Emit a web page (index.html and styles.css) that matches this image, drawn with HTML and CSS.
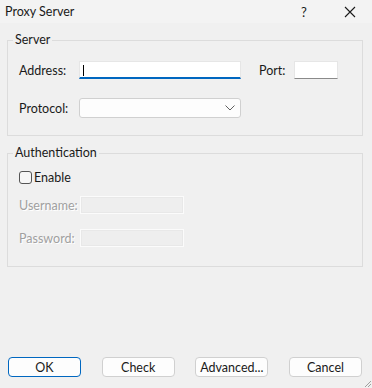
FILE: index.html
```html
<!DOCTYPE html>
<html lang="en">
<head>
    <meta charset="UTF-8">
    <title>Proxy Server</title>
    <link rel="stylesheet" href="styles.css">
</head>
<body>
    <!-- Title bar -->
    <div class="titlebar">
        <span class="title">Proxy Server</span>
        <span class="help">?</span>
        <span class="close">
            <svg width="12" height="12" viewBox="0 0 12 12"><path d="M1 1L11 11M11 1L1 11" stroke="#1a1a1a" stroke-width="1.1" fill="none"/></svg>
        </span>
    </div>

    <div class="dialog">
        <!-- Server -->
        <fieldset class="group group-server">
            <legend>Server</legend>
            <div class="row row-address">
                <label class="label">Address:</label>
                <div class="input input-address"><span class="caret"></span></div>
                <label class="label label-port">Port:</label>
                <div class="input input-port"></div>
            </div>
            <div class="row row-protocol">
                <label class="label">Protocol:</label>
                <div class="combo">
                    <svg width="10" height="6" viewBox="0 0 10 6"><path d="M0.5 0.5L5 5L9.5 0.5" stroke="#606060" stroke-width="1" fill="none"/></svg>
                </div>
            </div>
        </fieldset>

        <!-- Authentication -->
        <fieldset class="group group-auth">
            <legend>Authentication</legend>
            <div class="check-row">
                <span class="checkbox"></span>
                <span>Enable</span>
            </div>
            <div class="row row-user">
                <label class="label disabled">Username:</label>
                <div class="input input-disabled"></div>
            </div>
            <div class="row row-pass">
                <label class="label disabled">Password:</label>
                <div class="input input-disabled"></div>
            </div>
        </fieldset>

        <!-- Buttons -->
        <div class="buttons">
            <button class="btn btn-default">OK</button>
            <button class="btn">Check</button>
            <button class="btn">Advanced...</button>
            <button class="btn">Cancel</button>
        </div>
    </div>

    <svg class="grip" width="10" height="10" viewBox="0 0 10 10">
        <path d="M9 3L3 9M9 6L6 9" stroke="#a0a0a0" stroke-width="1" fill="none"/>
    </svg>
</body>
</html>
```

FILE: styles.css
```css
* {
    margin: 0;
    padding: 0;
    box-sizing: border-box;
}

body {
    font-family: Lato, "Noto Sans", sans-serif;
    font-size: 12.5px;
    color: #1a1a1a;
    background-color: #f0f0f0;
    width: 372px;
    height: 388px;
    overflow: hidden;
    position: relative;
    display: flex;
    flex-direction: column;
}

/* Title bar */
.titlebar {
    height: 23px;
    background-color: #f3f3f3;
    display: flex;
    align-items: center;
    padding-left: 5px;
}

.title {
    flex: 1;
}

.help {
    width: 20px;
    text-align: center;
    margin-right: 30px;
    font-size: 13px;
}

.close {
    width: 12px;
    height: 12px;
    margin-right: 16px;
    display: flex;
}

/* Dialog body */
.dialog {
    flex: 1;
    display: flex;
    flex-direction: column;
    padding: 9px 9px 0 7px;
}

.group {
    border: 1px solid #dcdcdc;
    padding: 0 0 0 11px;
    width: 356px;
}

.group legend {
    line-height: 16px;
    padding: 0 2px;
    margin-left: -6px;
}

.row {
    display: flex;
    align-items: center;
}

.label {
    width: 60px;
}

.label.disabled {
    color: #a0a0a0;
    text-shadow: 1px 1px 0 #ffffff;
}

.row-address {
    margin-top: 13px;
    height: 18px;
}

.row-protocol {
    margin-top: 19px;
    height: 20px;
    margin-bottom: 17px;
}

.input {
    height: 18px;
    background-color: #ffffff;
    border: 1px solid #e6e6e6;
    border-bottom-color: #8a8a8a;
}

.input-address {
    width: 162px;
    border-bottom: 2px solid #0067c0;
    padding: 3px 0 0 3px;
}

.caret {
    display: block;
    width: 1px;
    height: 11px;
    background-color: #000000;
}

.label-port {
    width: 35px;
    margin-left: 18px;
}

.input-port {
    width: 44px;
}

.combo {
    width: 162px;
    height: 20px;
    background-color: #fdfdfd;
    border: 1px solid #d0d0d0;
    border-radius: 3px;
    display: flex;
    align-items: center;
    justify-content: flex-end;
    padding-right: 5px;
}

.group-auth {
    margin-top: 9px;
}

.check-row {
    display: flex;
    align-items: center;
    gap: 2px;
    margin-top: 10px;
    height: 13px;
}

.checkbox {
    width: 13px;
    height: 13px;
    border: 1px solid #555555;
    border-radius: 3px;
    background-color: #f6f6f6;
}

.row-user {
    margin-top: 12px;
    height: 18px;
}

.row-pass {
    margin-top: 15px;
    height: 18px;
    margin-bottom: 19px;
}

.input-disabled {
    width: 104px;
    background-color: #eeeeee;
    border: 1px solid #fbfbfb;
    box-shadow: inset 0 0 0 1px #e8e8e8;
}

.group-auth .label {
    width: 61px;
}

/* Buttons */
.buttons {
    margin-top: auto;
    margin-bottom: 11px;
    margin-left: 1px;
    width: 354px;
    display: flex;
    justify-content: space-between;
}

.btn {
    width: 73px;
    height: 20px;
    font-family: inherit;
    font-size: 12.5px;
    color: #1a1a1a;
    background-color: #fdfdfd;
    border: 1px solid #d0d0d0;
    border-radius: 4px;
}

.btn-default {
    border-color: #0067c0;
}

.grip {
    position: absolute;
    right: 0;
    bottom: 0;
}
```
